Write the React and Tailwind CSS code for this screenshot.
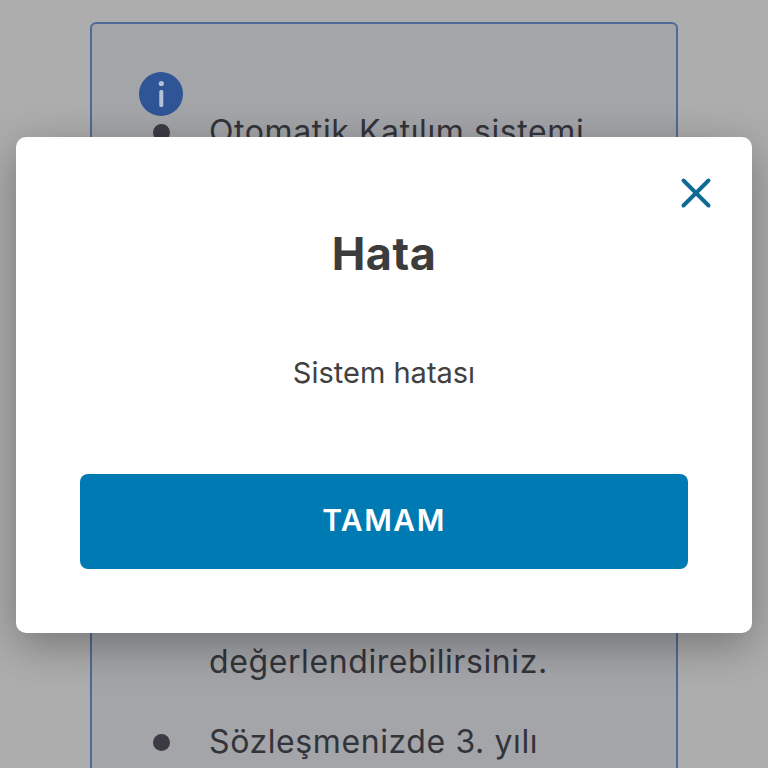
import { X } from 'lucide-react'

function InfoIcon() {
  return (
    <svg width="44" height="44" viewBox="0 0 44 44" className="block">
      <circle cx="22" cy="22" r="22" fill="#2f5597" />
      <circle cx="22.3" cy="11.5" r="2.6" fill="#b4c2d8" />
      <rect x="20.3" y="18" width="4" height="17" rx="1.5" fill="#b4c2d8" />
    </svg>
  )
}

function Bullet({ children, className = '' }) {
  return (
    <li className={`flex items-start ${className}`}>
      <span className="mt-[12px] ml-[14px] w-[17px] h-[17px] rounded-full bg-[#3c3a43] shrink-0" />
      <span className="ml-[39px]">{children}</span>
    </li>
  )
}

export default function App() {
  return (
    <div className="relative h-[768px] overflow-hidden bg-[#adadad] font-['Inter',sans-serif]">
      {/* arka plan kart */}
      <div className="mx-[90px] mt-[22px] pt-[48px] pl-[47px] h-[800px] rounded-t-[6px] border-2 border-[#4f6a96] bg-[#a3a5a9] text-[#33343a] text-[32px] tracking-[0.6px] leading-[40px]">
        <InfoIcon />
        <ul className="-mt-[4px]">
          <Bullet className="h-[530px]">Otomatik Katılım sistemi</Bullet>
          <li className="pl-[70px] h-[80px]">değerlendirebilirsiniz.</li>
          <Bullet>Sözleşmenizde 3. yılı</Bullet>
        </ul>
      </div>

      {/* hata modal */}
      <div className="absolute left-4 top-[137px] w-[736px] h-[496px] rounded-[10px] bg-white px-16 shadow-[0_12px_44px_rgba(0,0,0,0.32)] flex flex-col items-center">
        <button className="absolute right-[31px] top-[31px] text-[#0f6a94]">
          <X size={50} strokeWidth={1.9} />
        </button>
        <h2 className="mt-[91px] text-[45px] leading-[52px] font-bold tracking-[0.5px] text-[#3c3c3c]">Hata</h2>
        <p className="mt-[73px] text-[29px] leading-[40px] text-[#414141]">Sistem hatası</p>
        <button className="mt-[81px] w-full h-[95px] rounded-[8px] bg-[#007ab3] text-white text-[30px] leading-[40px] pb-[3px] font-semibold tracking-[1.5px]">
          TAMAM
        </button>
      </div>
    </div>
  )
}
